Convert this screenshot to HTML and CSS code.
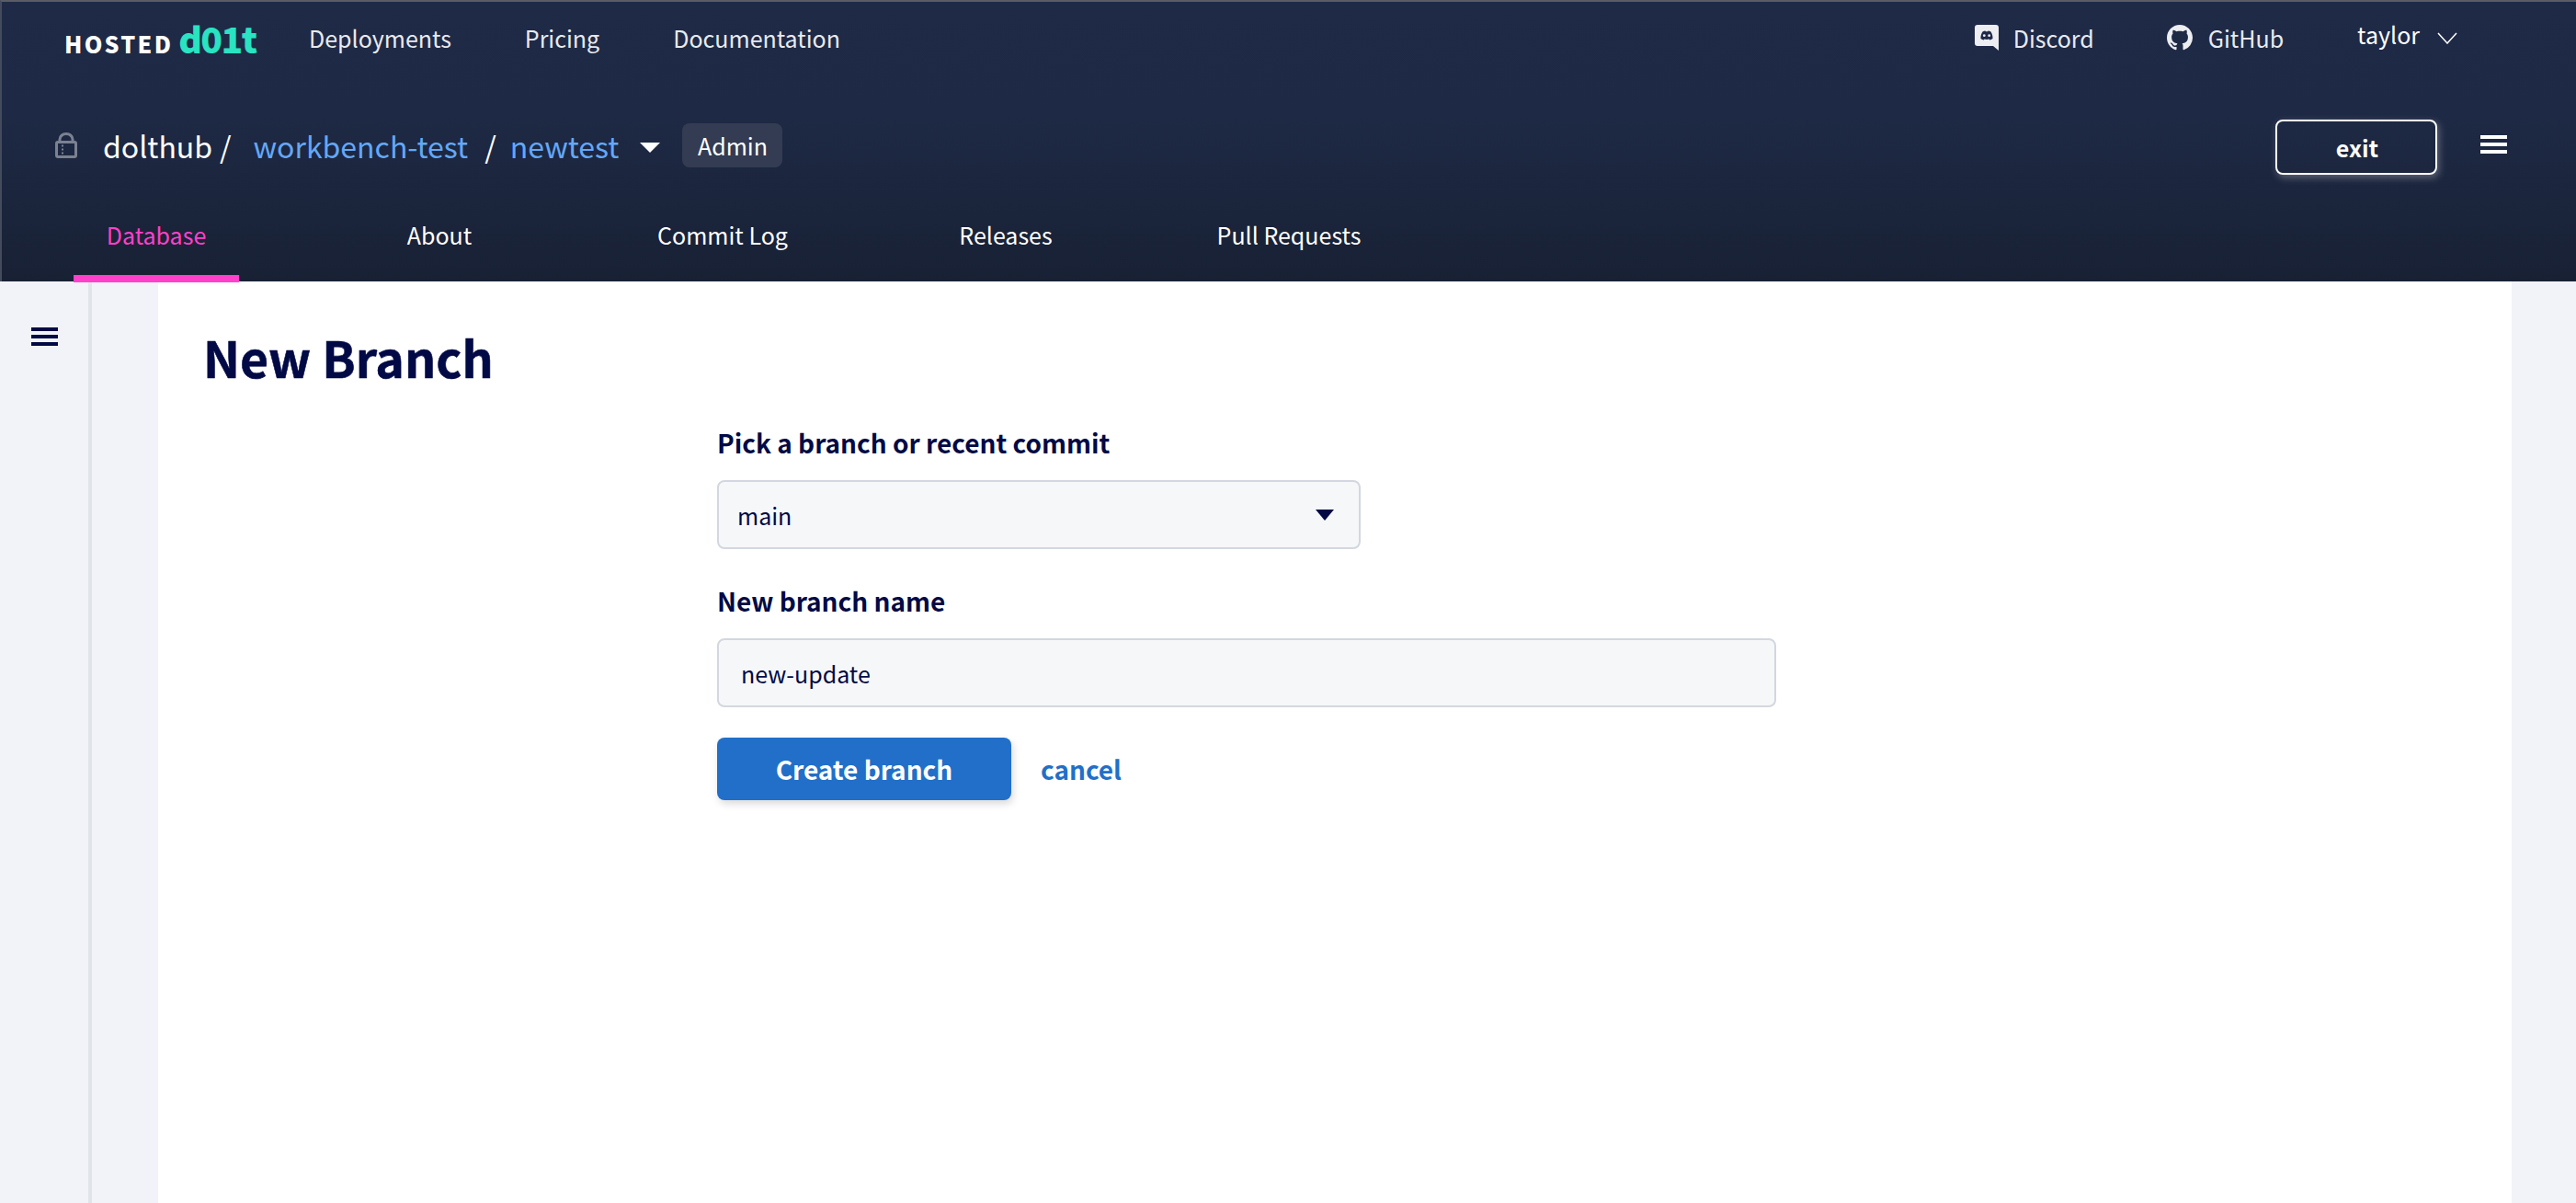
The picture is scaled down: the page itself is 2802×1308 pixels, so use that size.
FILE: index.html
```html
<!DOCTYPE html>
<html lang="en">
<head>
<meta charset="utf-8">
<title>New Branch</title>
<link rel="stylesheet" href="styles.css">
</head>
<body>
<header class="header">
  <div class="topbar">
    <a class="logo"><span class="logo-hosted">HOSTED</span><span class="logo-dolt">d01t</span></a>
    <nav class="topnav">
      <a>Deployments</a>
      <a>Pricing</a>
      <a>Documentation</a>
    </nav>
    <div class="topright">
      <a class="toplink discord">
        <svg class="icon-discord" viewBox="0 0 26 28"><path class="discord-bg" d="M3 0h20a3 3 0 0 1 3 3v25l-6-5H3a3 3 0 0 1-3-3V3a3 3 0 0 1 3-3z"/><path class="discord-face" d="M8.5 7.5c1-.5 2-.8 3-.9l.3.6h2.400l.3-.6c1 .1 2 .4 3 .9 1.500 2.400 2.200 4.900 2 7.600-1 .8-2.200 1.300-3.300 1.500l-.7-1.100c-1.700.5-3.300.5-5 0l-.7 1.100c-1.100-.2-2.300-.7-3.300-1.500-.2-2.700.5-5.200 2-7.600z"/><circle class="discord-bg" cx="10.300" cy="11.700" r="1.400"/><circle class="discord-bg" cx="15.700" cy="11.700" r="1.400"/></svg>
        Discord
      </a>
      <a class="toplink github">
        <svg class="icon-github" viewBox="0 0 16 16"><path d="M8 0C3.580 0 0 3.580 0 8c0 3.540 2.290 6.530 5.470 7.590.4.070.55-.17.55-.38 0-.19-.01-.82-.01-1.490-2.010.37-2.530-.49-2.690-.94-.09-.23-.48-.94-.82-1.130-.28-.15-.68-.52-.01-.53.63-.01 1.080.58 1.230.82.72 1.210 1.870.87 2.330.66.07-.52.28-.87.51-1.070-1.780-.2-3.640-.89-3.640-3.950 0-.87.31-1.590.82-2.150-.08-.2-.36-1.020.08-2.120 0 0 .67-.21 2.200.82.64-.18 1.320-.27 2-.27s1.360.09 2 .27c1.530-1.040 2.200-.82 2.200-.82.44 1.100.16 1.920.08 2.120.51.56.82 1.270.82 2.150 0 3.070-1.870 3.750-3.650 3.950.29.25.54.73.54 1.480 0 1.070-.01 1.930-.01 2.200 0 .21.15.46.55.38A8.013 8.013 0 0 0 16 8c0-4.420-3.580-8-8-8z"/></svg>
        GitHub
      </a>
      <a class="user">
        <span class="user-name">taylor</span>
        <svg class="icon-chevron" viewBox="0 0 22 13"><path d="M1 1l10 11L21 1"/></svg>
      </a>
    </div>
  </div>
  <div class="dbrow">
    <svg class="icon-lock" viewBox="0 0 24 28"><path class="lock-shackle" d="M5 10V7.500a7 6 0 0 1 14 0V10"/><rect class="lock-body" x="1.500" y="10.500" width="21" height="16" rx="1.500"/><path class="lock-dots" d="M8 13.500v2M8 17.500v2M8 21.500v2"/></svg>
    <span class="crumb owner">dolthub</span>
    <span class="slash slash-first">/</span>
    <a class="crumb link">workbench-test</a>
    <span class="slash slash-second">/</span>
    <a class="crumb link">newtest</a>
    <span class="caret"></span>
    <span class="badge">Admin</span>
    <button class="exit" type="button">exit</button>
    <div class="burger burger-light"><i></i><i></i><i></i></div>
  </div>
  <nav class="tabs">
    <a class="tab active">Database</a>
    <a class="tab">About</a>
    <a class="tab">Commit Log</a>
    <a class="tab">Releases</a>
    <a class="tab">Pull Requests</a>
  </nav>
</header>
<div class="page">
  <aside class="side">
    <div class="burger burger-dark"><i></i><i></i><i></i></div>
  </aside>
  <main class="main">
    <h1 class="title">New Branch</h1>
    <form class="form">
      <label class="label">Pick a branch or recent commit</label>
      <div class="select"><span>main</span><span class="select-caret"></span></div>
      <label class="label label-second">New branch name</label>
      <input class="input" type="text" value="new-update">
      <div class="actions">
        <button class="submit" type="button">Create branch</button>
        <a class="cancel">cancel</a>
      </div>
    </form>
  </main>
</div>
</body>
</html>
```
FILE: styles.css
```css
* { box-sizing: border-box; }
html, body { margin: 0; height: 100%; }
body {
  height: 1308px;
  overflow: hidden;
  background: #f1f3f8;
  color: #020a45;
  font-family: "Noto Sans CJK SC", "Noto Sans", sans-serif;
  display: flex;
  flex-direction: column;
}
.header {
  height: 306px;
  flex: none;
  border-top: 2px solid #5a5d63;
  border-left: 2px solid #444b5c;
  background: linear-gradient(#1f2a47 0%, #1e2945 40%, #182134 100%);
  color: #fff;
  display: flex;
  flex-direction: column;
}
.topbar {
  height: 78px;
  display: flex;
  align-items: center;
  font-size: 25px;
  color: #e8eaee;
}
.logo { display: flex; align-items: baseline; margin-left: 68px; width: 266px; }
.logo-hosted { font-weight: 900; font-size: 25px; letter-spacing: 2.300px; color: #fff; }
.logo-dolt { font-weight: 900; font-size: 39px; letter-spacing: -1.500px; color: #29e3c1; margin-left: 6px; }
.topnav { display: flex; gap: 80px; }
.topright { margin-left: auto; display: flex; align-items: center; }
.toplink { display: flex; align-items: center; }
.discord { gap: 16px; }
.github { gap: 17px; margin-left: 79px; }
.icon-discord { width: 26px; height: 28px; }
.discord-bg { fill: #eceef1; }
.discord-face { fill: #1f2a48; }
.icon-github { width: 28px; height: 28px; fill: #eceef1; }
.user { display: flex; align-items: center; margin-left: 80px; margin-right: 129px; color: #fff; }
.user-name { position: relative; top: -4px; }
.icon-chevron { width: 22px; height: 13px; margin-left: 19px; fill: none; stroke: #fff; stroke-width: 1.500; }
.dbrow {
  height: 96px;
  margin-top: 30px;
  padding-left: 58px;
  display: flex;
  align-items: center;
  font-size: 32px;
}
.icon-lock { width: 24px; height: 28px; margin-right: 28px; fill: none; stroke: #7b8191; stroke-width: 3; }
.lock-dots { stroke-width: 2; }
.lock-body { fill: none; }
.slash { color: #fff; }
.slash-first { margin: 0 24px 0 8px; }
.slash-second { margin: 0 15px 0 18px; }
.crumb.link { color: #63a8f7; }
.caret {
  width: 0; height: 0;
  margin: 4px 24px 0 23px;
  border-left: 11px solid transparent;
  border-right: 11px solid transparent;
  border-top: 11px solid #fff;
}
.badge {
  width: 109px;
  height: 48px;
  display: flex;
  align-items: center;
  justify-content: center;
  background: #333c52;
  border-radius: 8px;
  font-size: 25px;
}
.exit {
  margin-left: auto;
  width: 176px;
  height: 60px;
  margin-top: 4px;
  padding: 0 0 0 2px;
  background: transparent;
  border: 2px solid #fff;
  border-radius: 8px;
  color: #fff;
  font: 700 25px "Noto Sans CJK SC", "Noto Sans", sans-serif;
  box-shadow: 2px 3px 8px rgba(255, 255, 255, 0.3);
}
.burger { display: flex; flex-direction: column; justify-content: space-between; width: 29px; height: 20px; }
.burger i { display: block; height: 4px; }
.burger-light { margin: -2px 75px 0 47px; }
.burger-light i { background: #fff; }
.burger-dark i { background: #020a45; }
.tabs {
  flex: 1;
  padding: 0 0 2px 14px;
  display: grid;
  grid-template-columns: repeat(5, 308px);
  font-size: 25px;
}
.tab {
  position: relative;
  display: flex;
  justify-content: center;
  align-items: center;
}
.tab.active { color: #ff40cb; }
.tab.active::after {
  content: "";
  position: absolute;
  left: 64px;
  right: 64px;
  bottom: -3px;
  height: 8px;
  background: #ff40cb;
}
.page { flex: 1; display: flex; min-height: 0; }
.side {
  width: 100px;
  flex: none;
  border-right: 4px solid #e1e5ea;
  padding: 50px 0 0 34px;
}
.main {
  flex: 1;
  margin: 0 70px 0 72px;
  background: #fff;
  padding: 43px 0 0 49px;
}
.title {
  margin: 0;
  font-size: 53.500px;
  line-height: 78px;
  font-weight: 700;
  color: #020a45;
  -webkit-text-stroke: 0.600px #020a45;
}
.form { margin: 34px 0 0 559px; display: flex; flex-direction: column; align-items: flex-start; }
.label { font-size: 28px; font-weight: 700; line-height: 40px; color: #020a45; }
.label-second { margin-top: 36px; }
.select {
  width: 700px;
  height: 75px;
  margin-top: 21px;
  padding: 0 27px 0 20px;
  display: flex;
  align-items: center;
  justify-content: space-between;
  background: #f6f7f9;
  border: 2px solid #d3d7df;
  border-radius: 8px;
  font-size: 25px;
}
.select-caret {
  width: 0; height: 0;
  border-left: 10px solid transparent;
  border-right: 10px solid transparent;
  border-top: 12px solid #020a45;
}
.input {
  width: 1152px;
  height: 75px;
  margin-top: 21px;
  padding: 0 24px;
  background: #f6f7f9;
  border: 2px solid #d3d7df;
  border-radius: 8px;
  color: #020a45;
  font: 400 25px "Noto Sans CJK SC", "Noto Sans", sans-serif;
}
.actions { display: flex; align-items: center; margin-top: 33px; }
.submit {
  width: 320px;
  height: 68px;
  padding: 0;
  background: #216fc8;
  border: 0;
  border-radius: 8px;
  color: #fff;
  font: 700 28px "Noto Sans CJK SC", "Noto Sans", sans-serif;
  box-shadow: 2px 4px 8px rgba(0, 0, 0, 0.15);
}
.cancel { margin-left: 32px; font-size: 28px; font-weight: 700; color: #216fc8; }
```
